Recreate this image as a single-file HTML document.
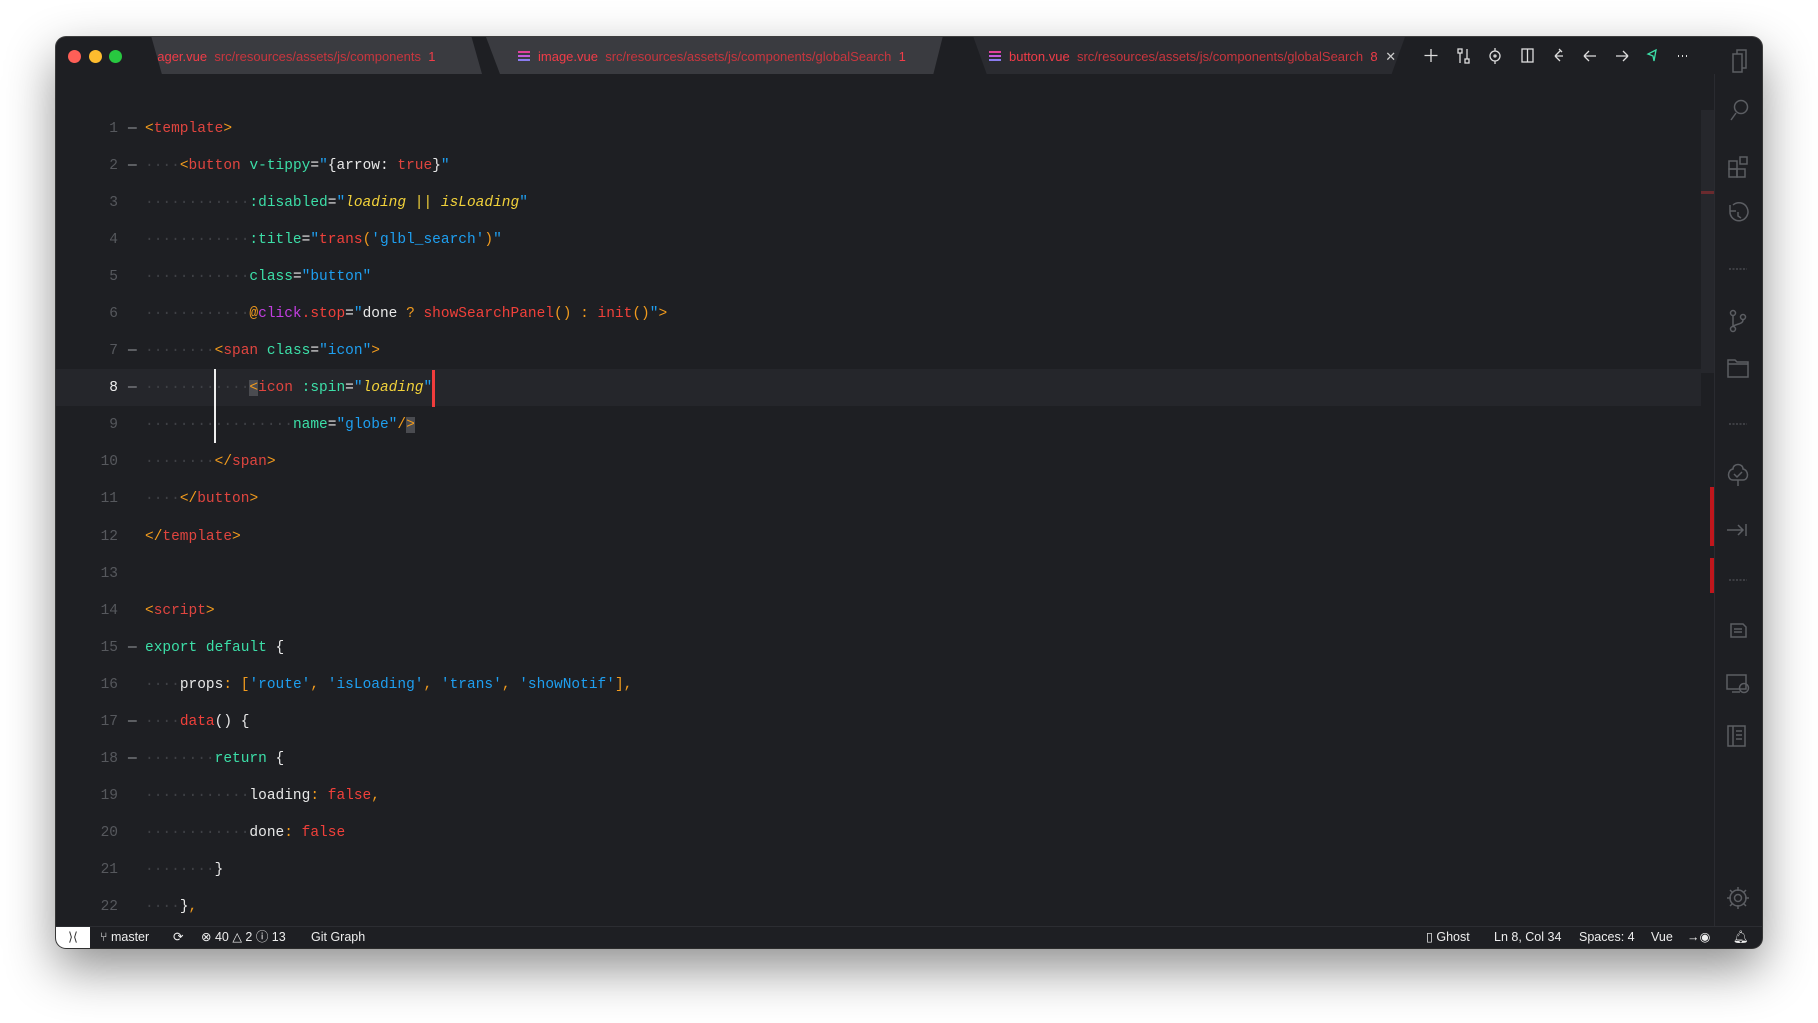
<!DOCTYPE html>
<html><head><meta charset="utf-8"><style>
*{margin:0;padding:0;box-sizing:border-box}
body{width:1818px;height:1023px;background:#fff;position:relative;overflow:hidden;font-family:"Liberation Sans",sans-serif}
#win{position:absolute;left:56px;top:37px;width:1706px;height:911px;background:#1e1f23;border-radius:10px;overflow:hidden;box-shadow:0 20px 50px rgba(0,0,0,.45),0 0 0 1px #444}
.tl{position:absolute;top:13px;width:13px;height:13px;border-radius:50%}
.tab{position:absolute;top:0;height:37px;font-size:13px;line-height:39px;white-space:nowrap;overflow:hidden}
.fn{color:#f03c48}.pth{color:#c8363e}
.ticon{display:inline-block;width:12px;height:11px;vertical-align:-1px;margin-right:8px;background:linear-gradient(#e0409a 0 2px,transparent 2px 4px,#c45adc 4px 6px,transparent 6px 8px,#8a7cf0 8px 10px,transparent 10px);}
#code{position:absolute;left:0;top:74px;width:1658px;font-family:"Liberation Mono",monospace;font-size:14.5px;}
.ln{position:relative;height:37.05px;line-height:37px;white-space:pre}
.num{position:absolute;left:0;width:62px;text-align:right;color:#56585d}
.fold{position:absolute;left:72px;color:#9a9ca0}
.c{position:absolute;left:89px;color:#e8e8e8}
.d{color:#3e4045}
.o{color:#f29b1d}.r{color:#e0453f}.g{color:#3cdfa8}.b{color:#1e9ff0}.y{color:#f2d23a;font-style:italic}.w{color:#eaeaea}.p{color:#c23ee0}.rr{color:#f0403a}
#status{position:absolute;left:0;top:889px;width:1706px;height:22px;border-top:1px solid #2c2d32;font-size:12.5px;color:#eee;line-height:21px}
#status span{position:absolute;top:0}
</style></head><body>
<div id="win">
  <div class="tl" style="left:12px;background:#fe5f57"></div>
  <div class="tl" style="left:33px;background:#febc2e"></div>
  <div class="tl" style="left:53px;background:#28c840"></div>
  <div class="tab" style="left:78px;width:348px;background:#3a3b40;clip-path:polygon(5% 0,97% 0,100% 100%,8% 100%);padding-left:16px"><span class="fn">nager.vue</span>&nbsp; <span class="pth">src/resources/assets/js/components</span>&nbsp; <span class="fn">1</span></div>
  <div class="tab" style="left:430px;width:466px;background:#3a3b40;clip-path:polygon(0 0,98% 0,96% 100%,3% 100%);padding-left:32px"><span class="ticon"></span><span class="fn">image.vue</span>&nbsp; <span class="pth">src/resources/assets/js/components/globalSearch</span>&nbsp; <span class="fn">1</span></div>
  <div class="tab" style="left:904px;width:445px;background:#2a2b30;clip-path:polygon(3% 0,100% 0,97% 100%,6% 100%);padding-left:29px"><span class="ticon"></span><span class="fn">button.vue</span>&nbsp; <span class="pth">src/resources/assets/js/components/globalSearch</span>&nbsp; <span class="fn">8</span> <span style="color:#ccc;margin-left:4px">✕</span></div>
  <svg style="position:absolute;left:1360px;top:8px" width="300" height="22" fill="none" stroke="#ddd" stroke-width="1.3">
    <path d="M15 4v13M8.5 10.5h13"/>
    <rect x="42" y="4" width="4" height="4"/><rect x="49" y="14" width="4" height="4"/><path d="M44 8v10M51 4v10"/>
    <circle cx="79" cy="11" r="5"/><circle cx="79" cy="11" r="1"/><path d="M79 3v3M79 16v3"/>
    <rect x="106" y="4" width="11" height="13"/><path d="M111.5 4v13"/>
    <path d="M147 11h-8M139 11l5-5M139 11l5 5M143 4l3 3"/>
    <path d="M180 11h-12M168 11l5-5M168 11l5 5"/>
    <path d="M200 11h12M212 11l-5-5M212 11l-5 5"/>
    <path d="M240 5l-8 4 5 2 1 5z" stroke="#3cdfa8"/>
    <path d="M262 11h1M266 11h1M270 11h1" stroke-width="2"/>
  </svg>

  <div style="position:absolute;left:1645px;top:73px;width:13px;height:263px;background:#26272c"></div>
  <div style="position:absolute;left:1645px;top:154px;width:13px;height:3px;background:#6a2a2e"></div>
  <div style="position:absolute;left:1654px;top:450px;width:4px;height:59px;background:#c0161c"></div>
  <div style="position:absolute;left:1654px;top:521px;width:4px;height:35px;background:#c0161c"></div>
  <div style="position:absolute;left:1658px;top:37px;width:1px;height:852px;background:#2a2b30"></div>

  <div style="position:absolute;left:0;top:332px;width:1645px;height:37px;background:#25262b"></div>

  <div id="code">
<div class="ln"><span class="num">1</span><span class="fold">—</span><span class="c"><span class="o">&lt;</span><span class="r">template</span><span class="o">&gt;</span></span></div>
<div class="ln"><span class="num">2</span><span class="fold">—</span><span class="c"><span class="d">····</span><span class="o">&lt;</span><span class="r">button</span> <span class="g">v-tippy</span><span class="w">=</span><span class="b">"</span>{arrow: <span class="r">true</span>}<span class="b">"</span></span></div>
<div class="ln"><span class="num">3</span><span class="c"><span class="d">············</span><span class="g">:disabled</span><span class="w">=</span><span class="b">"</span><span class="y">loading || isLoading</span><span class="b">"</span></span></div>
<div class="ln"><span class="num">4</span><span class="c"><span class="d">············</span><span class="g">:title</span><span class="w">=</span><span class="b">"</span><span class="rr">trans</span><span class="o">(</span><span class="b">'glbl_search'</span><span class="o">)</span><span class="b">"</span></span></div>
<div class="ln"><span class="num">5</span><span class="c"><span class="d">············</span><span class="g">class</span><span class="w">=</span><span class="b">"button"</span></span></div>
<div class="ln"><span class="num">6</span><span class="c"><span class="d">············</span><span class="o">@</span><span class="p">click</span><span class="rr">.stop</span><span class="w">=</span><span class="b">"</span>done <span class="o">?</span> <span class="rr">showSearchPanel</span><span class="o">()</span> <span class="o">:</span> <span class="rr">init</span><span class="o">()</span><span class="b">"</span><span class="o">&gt;</span></span></div>
<div class="ln"><span class="num">7</span><span class="fold">—</span><span class="c"><span class="d">········</span><span class="o">&lt;</span><span class="r">span</span> <span class="g">class</span><span class="w">=</span><span class="b">"icon"</span><span class="o">&gt;</span></span></div>
<div class="ln"><span class="num" style="color:#eee">8</span><span class="fold">—</span><span class="c"><span class="d">············</span><span class="o" style="background:#4a4b50">&lt;</span><span class="r">icon</span> <span class="g">:spin</span><span class="w">=</span><span class="b">"</span><span class="y">loading</span><span class="b">"</span><span style="display:inline-block;width:3px;height:37px;vertical-align:top;background:#f03c3c"></span></span></div>
<div class="ln"><span class="num">9</span><span class="c"><span class="d">·················</span><span class="g">name</span><span class="w">=</span><span class="b">"globe"</span><span class="o">/</span><span class="o" style="background:#4a4b50">&gt;</span></span></div>
<div class="ln"><span class="num">10</span><span class="c"><span class="d">········</span><span class="o">&lt;/</span><span class="r">span</span><span class="o">&gt;</span></span></div>
<div class="ln"><span class="num">11</span><span class="c"><span class="d">····</span><span class="o">&lt;/</span><span class="r">button</span><span class="o">&gt;</span></span></div>
<div class="ln"><span class="num">12</span><span class="c"><span class="o">&lt;/</span><span class="r">template</span><span class="o">&gt;</span></span></div>
<div class="ln"><span class="num">13</span></div>
<div class="ln"><span class="num">14</span><span class="c"><span class="o">&lt;</span><span class="r">script</span><span class="o">&gt;</span></span></div>
<div class="ln"><span class="num">15</span><span class="fold">—</span><span class="c"><span class="g">export default</span> {</span></div>
<div class="ln"><span class="num">16</span><span class="c"><span class="d">····</span>props<span class="o">:</span> <span class="o">[</span><span class="b">'route'</span><span class="o">,</span> <span class="b">'isLoading'</span><span class="o">,</span> <span class="b">'trans'</span><span class="o">,</span> <span class="b">'showNotif'</span><span class="o">],</span></span></div>
<div class="ln"><span class="num">17</span><span class="fold">—</span><span class="c"><span class="d">····</span><span class="rr">data</span>() {</span></div>
<div class="ln"><span class="num">18</span><span class="fold">—</span><span class="c"><span class="d">········</span><span class="g">return</span> {</span></div>
<div class="ln"><span class="num">19</span><span class="c"><span class="d">············</span>loading<span class="o">:</span> <span class="rr">false</span><span class="o">,</span></span></div>
<div class="ln"><span class="num">20</span><span class="c"><span class="d">············</span>done<span class="o">:</span> <span class="rr">false</span></span></div>
<div class="ln"><span class="num">21</span><span class="c"><span class="d">········</span>}</span></div>
<div class="ln"><span class="num">22</span><span class="c"><span class="d">····</span>}<span class="o">,</span></span></div>
  </div>
  <div style="position:absolute;left:158px;top:332px;width:2px;height:74px;background:#eee"></div>

  <svg style="position:absolute;left:1658px;top:0" width="48" height="889" fill="none" stroke="#5c5e63" stroke-width="1.5">
    <path d="M19 17h9v18h-9zM23 17v-4h9v18h-4"/>
    <circle cx="27" cy="70" r="6.5"/><path d="M22 76l-5 7"/>
    <rect x="15" y="124" width="8" height="8"/><rect x="15" y="132" width="8" height="8"/><rect x="23" y="132" width="8" height="8"/><rect x="26" y="120" width="7" height="7"/>
    <path d="M16 174a9 9 0 1 0 3-6M16 168v6h6M24 175v4l3 2"/>
    <path d="M15 232h18" stroke-dasharray="2 1.5" stroke-width="1"/>
    <circle cx="19" cy="276" r="2.5"/><circle cx="19" cy="292" r="2.5"/><circle cx="29" cy="280" r="2.5"/><path d="M19 279v10M29 283c0 5-10 4-10 7"/>
    <path d="M14 327h20v13H14zM14 327v-4h7l2 2h11v2"/>
    <path d="M15 387h18" stroke-dasharray="2 1.5" stroke-width="1"/>
    <path d="M24 443v6M19 443c-6 0-6-10 0-11 0-6 10-6 10 0 6 1 6 11 0 11zM20 437l3 3 5-5"/>
    <path d="M13 493h16M24 488l5 5-5 5M32 487v12"/>
    <path d="M15 543h18" stroke-dasharray="2 1.5" stroke-width="1"/>
    <path d="M17 587h12l3 3v10H17zM20 592h8M20 595h8"/>
    <rect x="13" y="638" width="19" height="14"/><path d="M18 655h8"/><circle cx="30" cy="651" r="4.5"/>
    <rect x="14" y="689" width="17" height="20"/><path d="M19 689v20M22 694h6M22 698h6M22 702h6"/>
    <circle cx="24" cy="861" r="3.5"/><path d="M24 850v4M24 868v4M13 861h4M31 861h4M16 853l3 3M29 866l3 3M16 869l3-3M29 856l3-3"/><circle cx="24" cy="861" r="8"/>
  </svg>

  <div id="status">
    <span style="left:0;width:34px;height:21px;background:#fff;color:#333;text-align:center">⟩⟨</span>
    <span style="left:44px">⑂ master</span>
    <span style="left:117px">⟳</span>
    <span style="left:145px">⊗ 40 △ 2 ⓘ 13</span>
    <span style="left:255px">Git Graph</span>
    <span style="left:1370px">▯ Ghost</span>
    <span style="left:1438px">Ln 8, Col 34</span>
    <span style="left:1523px">Spaces: 4</span>
    <span style="left:1595px">Vue</span>
    <span style="left:1631px">→◉</span>
    <span style="left:1677px">🔔︎</span>
  </div>
</div>
</body></html>
